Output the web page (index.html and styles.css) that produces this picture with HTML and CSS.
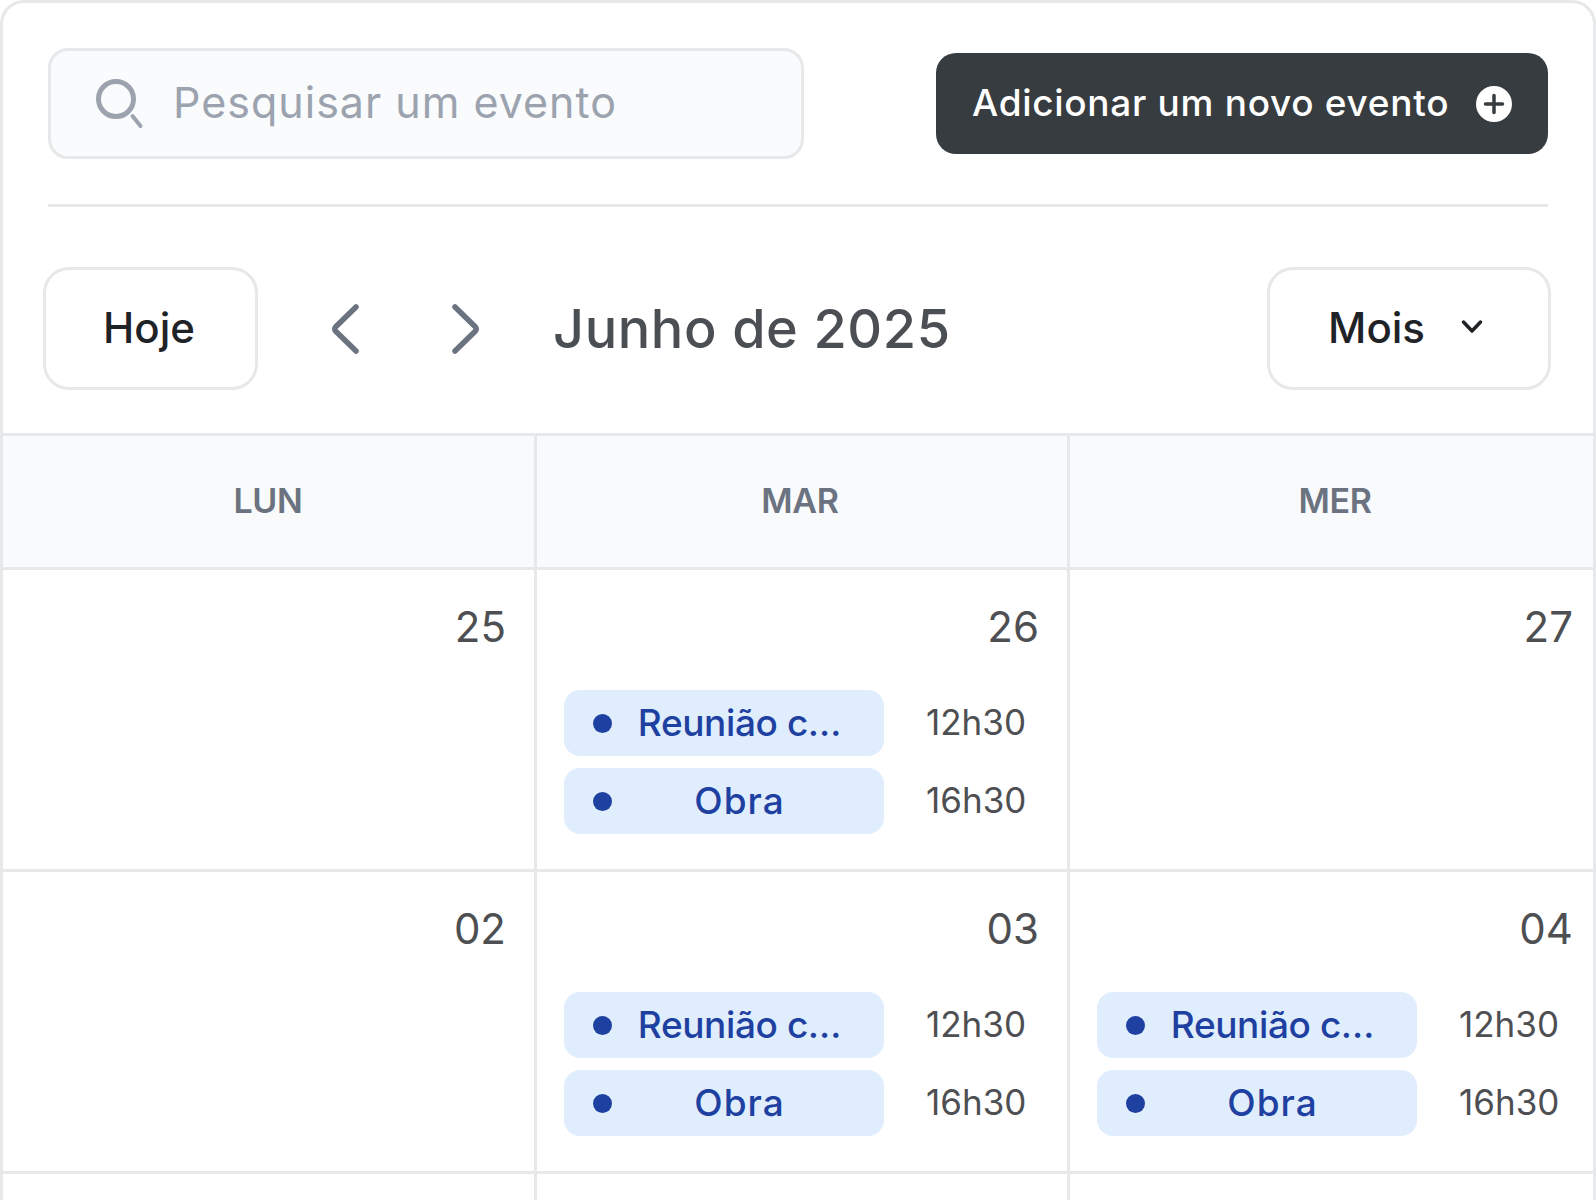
FILE: index.html
```html
<!DOCTYPE html>
<html>
<head>
  <title>Calendário</title>
  <link rel="stylesheet" href="styles.css">
</head>
<body>
  <div class="card">
    <div class="topbar">
      <div class="search">
        <svg class="search-icon" width="50" height="50" viewBox="0 0 50 50" fill="none">
          <circle cx="20" cy="20" r="17.500" stroke="#9ca3af" stroke-width="5"/>
          <path d="M36.500 37L44.500 47" stroke="#9ca3af" stroke-width="4" stroke-linecap="round"/>
        </svg>
        <span class="search-text">Pesquisar um evento</span>
      </div>
      <button class="add-btn">
        <span>Adicionar um novo evento</span>
        <svg width="36" height="36" viewBox="0 0 36 36">
          <circle cx="18" cy="18" r="18" fill="#fff"/>
          <path d="M18 9.500V26.500M9.500 18H26.500" stroke="#373c40" stroke-width="3.500" stroke-linecap="round"/>
        </svg>
      </button>
    </div>

    <div class="toolbar">
      <button class="outline-btn today-btn">Hoje</button>
      <svg class="nav-icon" width="28" height="50" viewBox="0 0 28 50" fill="none">
        <path d="M25 3L4.500 23a3 3 0 0 0 0 4L25 47" stroke="#6b7280" stroke-width="5.500" stroke-linecap="round" stroke-linejoin="round"/>
      </svg>
      <svg class="nav-icon" width="28" height="50" viewBox="0 0 28 50" fill="none">
        <path d="M3 3L23.500 23a3 3 0 0 1 0 4L3 47" stroke="#6b7280" stroke-width="5.500" stroke-linecap="round" stroke-linejoin="round"/>
      </svg>
      <h1 class="month">Junho de 2025</h1>
      <button class="outline-btn view-btn">
        <span>Mois</span>
        <svg width="22" height="16" viewBox="0 0 22 16" fill="none">
          <path d="M2.500 3L11 12L19.500 3" stroke="#1f2328" stroke-width="3.500" stroke-linecap="round" stroke-linejoin="round"/>
        </svg>
      </button>
    </div>

    <div class="grid">
      <div class="head first">LUN</div>
      <div class="head">MAR</div>
      <div class="head last">MER</div>

      <div class="cell"><div class="date">25</div></div>
      <div class="cell">
        <div class="date">26</div>
        <div class="event"><div class="pill"><i class="dot"></i><span class="pill-label">Reunião c…</span></div><span class="time">12h30</span></div>
        <div class="event"><div class="pill"><i class="dot"></i><span class="pill-label short">Obra</span></div><span class="time">16h30</span></div>
      </div>
      <div class="cell last"><div class="date">27</div></div>

      <div class="cell"><div class="date">02</div></div>
      <div class="cell">
        <div class="date">03</div>
        <div class="event"><div class="pill"><i class="dot"></i><span class="pill-label">Reunião c…</span></div><span class="time">12h30</span></div>
        <div class="event"><div class="pill"><i class="dot"></i><span class="pill-label short">Obra</span></div><span class="time">16h30</span></div>
      </div>
      <div class="cell last">
        <div class="date">04</div>
        <div class="event"><div class="pill"><i class="dot"></i><span class="pill-label">Reunião c…</span></div><span class="time">12h30</span></div>
        <div class="event"><div class="pill"><i class="dot"></i><span class="pill-label short">Obra</span></div><span class="time">16h30</span></div>
      </div>

      <div class="cell"></div>
      <div class="cell"></div>
      <div class="cell last"></div>
    </div>
  </div>
</body>
</html>
```

FILE: styles.css
```css
html, body {
  margin: 0;
  height: 1200px;
  overflow: hidden;
  background-color: #fff;
}
body {
  font-family: Inter, "Noto Sans", sans-serif;
  color: #4d4f52;
}
.card {
  box-sizing: border-box;
  height: 1200px;
  border: 3px solid #e6e8ea;
  border-bottom: none;
  border-radius: 24px 24px 0 0;
  overflow: hidden;
}
.topbar {
  display: flex;
  align-items: center;
  justify-content: space-between;
  margin: 0 45px;
  padding: 45px 0;
  border-bottom: 3px solid #e6e8ea;
}
.search {
  box-sizing: border-box;
  display: flex;
  align-items: center;
  width: 756px;
  height: 111px;
  padding-left: 45px;
  background-color: #f9fbfd;
  border: 3px solid #e6e8ea;
  border-radius: 20px;
}
.search-icon {
  margin-right: 27px;
}
.search-text {
  padding-bottom: 4px;
  font-size: 43px;
  color: #9ca3af;
  letter-spacing: 1px;
}
button {
  font-family: inherit;
  cursor: pointer;
}
.add-btn {
  box-sizing: border-box;
  display: flex;
  align-items: center;
  justify-content: space-between;
  width: 612px;
  height: 101px;
  padding: 0 36px;
  background-color: #373c40;
  border: none;
  border-radius: 20px;
  color: #fff;
  font-size: 37px;
  font-weight: 500;
  letter-spacing: 0.7px;
}
.add-btn span {
  padding-bottom: 2px;
}
.toolbar {
  display: flex;
  align-items: center;
  gap: 73px;
  padding: 60px 42px 43px 40px;
}
.outline-btn {
  box-sizing: border-box;
  height: 123px;
  padding-bottom: 4px;
  background-color: #fff;
  border: 3px solid #e6e8ea;
  border-radius: 26px;
  color: #1f2328;
  font-size: 42px;
  font-weight: 500;
}
.today-btn {
  width: 215px;
  padding-right: 9px;
}
.nav-icon + .nav-icon {
  margin-left: 20px;
}
.month {
  flex: 1;
  margin: 0;
  font-size: 54px;
  font-weight: 500;
  letter-spacing: 0.6px;
  color: #4b4f54;
}
.view-btn {
  display: flex;
  align-items: center;
  justify-content: center;
  gap: 36px;
  width: 284px;
  padding-right: 13px;
}
.grid {
  display: grid;
  grid-template-columns: 534px 533px 1fr;
  grid-template-rows: 134px;
  grid-auto-rows: 302px;
  border-top: 3px solid #e6e8ea;
}
.head {
  display: flex;
  align-items: center;
  justify-content: center;
  box-sizing: border-box;
  padding: 0 4px 2px 0;
  background-color: #f9fafc;
  border-right: 3px solid #e6e8ea;
  border-bottom: 3px solid #e6e8ea;
  font-size: 34px;
  font-weight: 600;
  letter-spacing: -0.3px;
  color: #6b7280;
}
.head.first {
  padding-right: 1px;
}
.cell {
  box-sizing: border-box;
  padding: 28px 28px 0 27px;
  border-right: 3px solid #e6e8ea;
  border-bottom: 3px solid #e6e8ea;
}
.cell.last, .head.last {
  border-right: none;
}
.head.last {
  padding: 0 0 2px 7px;
}
.cell.last {
  padding-left: 27px;
  padding-right: 20px;
}
.date {
  height: 58px;
  margin-bottom: 34px;
  font-size: 42px;
  line-height: 58px;
  text-align: right;
}
.event {
  display: flex;
  align-items: center;
  gap: 42px;
  margin-bottom: 12px;
}
.pill {
  box-sizing: border-box;
  display: flex;
  align-items: center;
  gap: 13px;
  flex: none;
  width: 320px;
  height: 66px;
  padding: 0 30px 0 29px;
  background-color: #dfedfd;
  border-radius: 16px;
}
.dot {
  flex: none;
  width: 19px;
  height: 19px;
  background-color: #1e40a0;
  border-radius: 50%;
}
.pill-label {
  flex: 1;
  padding-bottom: 2px;
  font-size: 37px;
  font-weight: 500;
  letter-spacing: -0.4px;
  color: #1e40a0;
  text-align: center;
  white-space: nowrap;
}
.pill-label.short {
  letter-spacing: 1px;
}
.time {
  padding-bottom: 2px;
  font-size: 35px;
  color: #4d4f52;
  white-space: nowrap;
}
```
